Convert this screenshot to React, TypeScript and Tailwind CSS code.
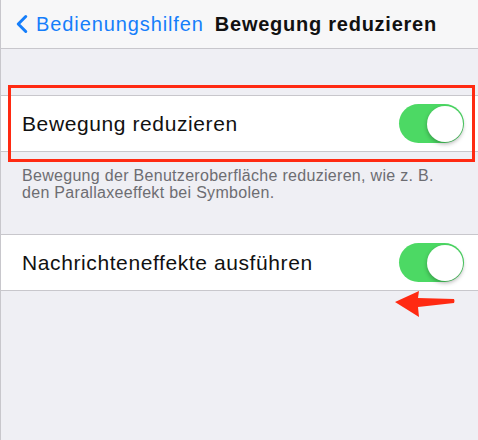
import { ChevronLeft } from 'lucide-react';

const font = { fontFamily: '"Liberation Sans", Arial, sans-serif' };

const Toggle = () => (
  <div className="relative h-[39px] w-[65px] rounded-full bg-[#4cd964]">
    <div className="absolute right-[1.5px] top-[1.5px] h-[36px] w-[36px] rounded-full bg-white shadow-[0_2px_4px_rgba(0,0,0,0.3)]" />
  </div>
);

const Row = ({ label }: { label: string }) => (
  <div className="flex h-[57px] items-center justify-between border-y border-[#c8c7cc] bg-white pl-[21px] pr-[14px]">
    <span className="text-[21px] tracking-[0.6px] text-[#111]">{label}</span>
    <Toggle />
  </div>
);

export default function App() {
  return (
    <div className="relative h-[440px] w-[478px] overflow-hidden border-l border-[#c8c7cc] bg-[#efeff4]" style={font}>
      <div className="flex h-[49px] items-center border-b border-[#c8c7cc] bg-[#f7f7f8]">
        <div className="flex items-center text-[#157efb]">
          <ChevronLeft className="ml-[6px] h-[30px] w-[30px]" strokeWidth={2.4} />
          <span className="ml-[-1px] text-[20px] tracking-[0.9px]">Bedienungshilfen</span>
        </div>
        <span className="ml-[11px] text-[20px] font-bold tracking-[0.75px] text-[#111]">Bewegung reduzieren</span>
      </div>

      <div className="mt-[46px]">
        <Row label="Bewegung reduzieren" />
        <p className="px-[21px] pt-[15px] text-[16px] leading-[17px] tracking-[0.3px] text-[#6d6d72]">
          Bewegung der Benutzeroberfläche reduzieren, wie z. B. den Parallaxeeffekt bei Symbolen.
        </p>
      </div>

      <div className="mt-[33px]">
        <Row label="Nachrichteneffekte ausführen" />
      </div>

      <div className="absolute left-[7px] top-[85px] h-[77px] w-[467px] border-[3px] border-[#ff2a12]" />

      <svg className="absolute left-[390px] top-[288px]" width="68" height="32" viewBox="0 0 68 32">
        <path d="M4 14 L28 3 L27 10 L63 11 Q64 13 63 15 L27 19 L28 29 Z" fill="#ff2a12" />
      </svg>
    </div>
  );
}
